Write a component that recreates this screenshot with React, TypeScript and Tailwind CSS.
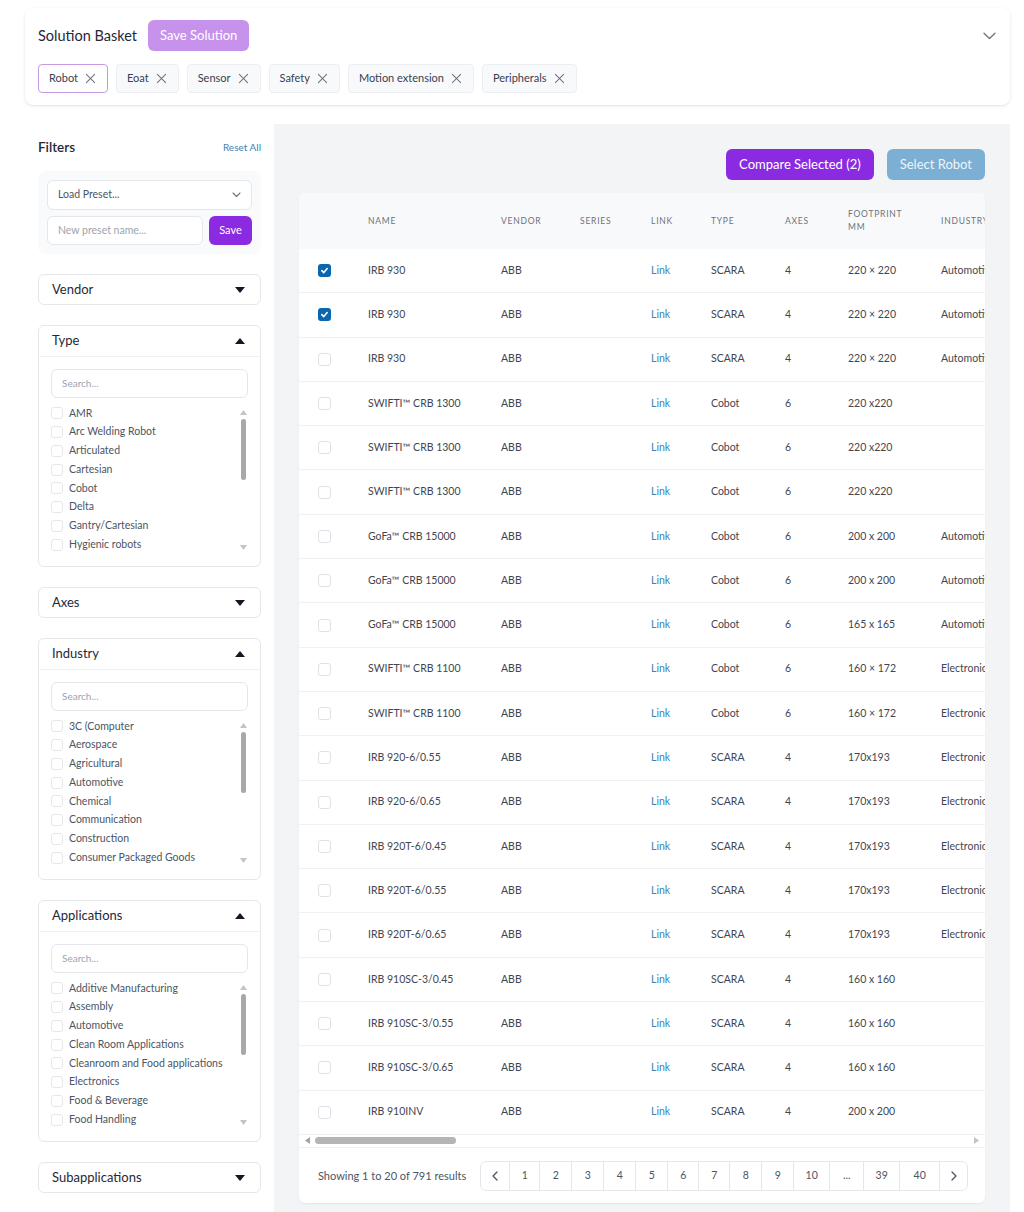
import React from "react";

const chips = ["Robot", "Eoat", "Sensor", "Safety", "Motion extension", "Peripherals"];

type Row = { name: string; vendor: string; type: string; axes: string; fp: string; ind: string; checked?: boolean };

const rows: Row[] = [
  { name: "IRB 930", vendor: "ABB", type: "SCARA", axes: "4", fp: "220 × 220", ind: "Automotive", checked: true },
  { name: "IRB 930", vendor: "ABB", type: "SCARA", axes: "4", fp: "220 × 220", ind: "Automotive", checked: true },
  { name: "IRB 930", vendor: "ABB", type: "SCARA", axes: "4", fp: "220 × 220", ind: "Automotive" },
  { name: "SWIFTI™ CRB 1300", vendor: "ABB", type: "Cobot", axes: "6", fp: "220 x220", ind: "" },
  { name: "SWIFTI™ CRB 1300", vendor: "ABB", type: "Cobot", axes: "6", fp: "220 x220", ind: "" },
  { name: "SWIFTI™ CRB 1300", vendor: "ABB", type: "Cobot", axes: "6", fp: "220 x220", ind: "" },
  { name: "GoFa™ CRB 15000", vendor: "ABB", type: "Cobot", axes: "6", fp: "200 x 200", ind: "Automotive" },
  { name: "GoFa™ CRB 15000", vendor: "ABB", type: "Cobot", axes: "6", fp: "200 x 200", ind: "Automotive" },
  { name: "GoFa™ CRB 15000", vendor: "ABB", type: "Cobot", axes: "6", fp: "165 x 165", ind: "Automotive" },
  { name: "SWIFTI™ CRB 1100", vendor: "ABB", type: "Cobot", axes: "6", fp: "160 × 172", ind: "Electronics" },
  { name: "SWIFTI™ CRB 1100", vendor: "ABB", type: "Cobot", axes: "6", fp: "160 × 172", ind: "Electronics" },
  { name: "IRB 920-6/0.55", vendor: "ABB", type: "SCARA", axes: "4", fp: "170x193", ind: "Electronics" },
  { name: "IRB 920-6/0.65", vendor: "ABB", type: "SCARA", axes: "4", fp: "170x193", ind: "Electronics" },
  { name: "IRB 920T-6/0.45", vendor: "ABB", type: "SCARA", axes: "4", fp: "170x193", ind: "Electronics" },
  { name: "IRB 920T-6/0.55", vendor: "ABB", type: "SCARA", axes: "4", fp: "170x193", ind: "Electronics" },
  { name: "IRB 920T-6/0.65", vendor: "ABB", type: "SCARA", axes: "4", fp: "170x193", ind: "Electronics" },
  { name: "IRB 910SC-3/0.45", vendor: "ABB", type: "SCARA", axes: "4", fp: "160 x 160", ind: "" },
  { name: "IRB 910SC-3/0.55", vendor: "ABB", type: "SCARA", axes: "4", fp: "160 x 160", ind: "" },
  { name: "IRB 910SC-3/0.65", vendor: "ABB", type: "SCARA", axes: "4", fp: "160 x 160", ind: "" },
  { name: "IRB 910INV", vendor: "ABB", type: "SCARA", axes: "4", fp: "200 x 200", ind: "" },
];

const typeItems = ["AMR", "Arc Welding Robot", "Articulated", "Cartesian", "Cobot", "Delta", "Gantry/Cartesian", "Hygienic robots"];
const industryItems = ["3C (Computer", "Aerospace", "Agricultural", "Automotive", "Chemical", "Communication", "Construction", "Consumer Packaged Goods"];
const appItems = ["Additive Manufacturing", "Assembly", "Automotive", "Clean Room Applications", "Cleanroom and Food applications", "Electronics", "Food & Beverage", "Food Handling"];

function XIcon() {
  return (
    <svg width="11" height="11" viewBox="0 0 12 12" fill="none" stroke="#6b7280" strokeWidth="1.1" strokeLinecap="round">
      <path d="M1.5 1.5 L10.5 10.5 M10.5 1.5 L1.5 10.5" />
    </svg>
  );
}

function Caret({ up }: { up?: boolean }) {
  return (
    <svg width="10" height="6" viewBox="0 0 10 6">
      {up ? <polygon points="0,6 10,6 5,0" fill="#111827" /> : <polygon points="0,0 10,0 5,6" fill="#111827" />}
    </svg>
  );
}

function Chevron({ dir }: { dir: "left" | "right" }) {
  return (
    <svg width="6" height="10" viewBox="0 0 6 10" fill="none" stroke="#4b5563" strokeWidth="1.3" strokeLinecap="round" strokeLinejoin="round">
      {dir === "left" ? <path d="M5 1 L1 5 L5 9" /> : <path d="M1 1 L5 5 L1 9" />}
    </svg>
  );
}

function ClosedSection({ title }: { title: string }) {
  return (
    <div className="flex h-[31px] items-center justify-between rounded-md border border-[#e5e7eb] bg-white pl-[13px] pr-[15px]">
      <span className="text-[13px] text-[#1f2937]">{title}</span>
      <Caret />
    </div>
  );
}

function OpenSection({ title, items }: { title: string; items: string[] }) {
  return (
    <div className="rounded-md border border-[#e5e7eb] bg-white">
      <div className="flex h-[31px] items-center justify-between border-b border-[#eef0f2] pl-[13px] pr-[15px]">
        <span className="text-[13px] text-[#1f2937]">{title}</span>
        <Caret up />
      </div>
      <div className="px-[12px] pt-[12px] pb-[12px]">
        <div className="flex h-[29px] items-center rounded-md border border-[#e5e7eb] px-[10px] text-[10px] text-[#9ca3af]">
          Search...
        </div>
        <div className="mt-[6px] flex">
          <div className="flex-1">
            {items.map((it) => (
              <div key={it} className="flex h-[18.75px] items-center gap-[6px]">
                <span className="h-[12px] w-[12px] rounded-[3px] border border-[#e5e7eb] bg-white" />
                <span className="text-[10.5px] text-[#4b5563]">{it}</span>
              </div>
            ))}
          </div>
          <div className="flex w-[10px] flex-col items-center pt-[6px] pb-[4px]">
            <svg width="7" height="5" viewBox="0 0 7 5"><polygon points="0,5 7,5 3.5,0" fill="#c4c4c4" /></svg>
            <div className="mt-[4px] h-[61px] w-[5px] rounded-full bg-[#a8a8a8]" />
            <div className="flex-1" />
            <svg width="7" height="5" viewBox="0 0 7 5"><polygon points="0,0 7,0 3.5,5" fill="#c4c4c4" /></svg>
          </div>
        </div>
      </div>
    </div>
  );
}

function Checkbox({ checked }: { checked?: boolean }) {
  if (checked) {
    return (
      <span className="flex h-[13px] w-[13px] items-center justify-center rounded-[3px] bg-[#0b66b0]">
        <svg width="9" height="9" viewBox="0 0 10 10" fill="none" stroke="white" strokeWidth="1.8" strokeLinecap="round" strokeLinejoin="round">
          <path d="M2 5.2 L4.2 7.3 L8 2.8" />
        </svg>
      </span>
    );
  }
  return <span className="h-[13px] w-[13px] rounded-[3px] border border-[#dfe2e6] bg-white" />;
}

const cols = ["w-[57px]", "w-[133px]", "w-[79px]", "w-[71px]", "w-[60px]", "w-[74px]", "w-[63px]", "w-[93px]", "w-[130px]"];

const pages = [
  { t: "<", w: "w-[28px]" },
  { t: "1", w: "w-[30px]" },
  { t: "2", w: "w-[32px]" },
  { t: "3", w: "w-[32px]" },
  { t: "4", w: "w-[32px]" },
  { t: "5", w: "w-[32px]" },
  { t: "6", w: "w-[31px]" },
  { t: "7", w: "w-[31px]" },
  { t: "8", w: "w-[32px]" },
  { t: "9", w: "w-[32px]" },
  { t: "10", w: "w-[36px]" },
  { t: "...", w: "w-[34px]" },
  { t: "39", w: "w-[36px]" },
  { t: "40", w: "w-[40px]" },
  { t: ">", w: "w-[28px]" },
];

export default function App() {
  return (
    <div className="min-h-[1212px] bg-white pl-[25px] pr-[14px] pt-[8px] font-[Lato,'Noto_Sans',sans-serif] text-[#374151]">
      {/* Solution basket */}
      <div className="rounded-lg bg-white px-[13px] pt-[12px] pb-[12px] shadow-[0_1px_3px_rgba(0,0,0,0.12)]">
        <div className="flex items-center justify-between">
          <div className="flex items-center gap-[11px]">
            <span className="text-[14.5px] text-[#1f2937]">Solution Basket</span>
            <button className="h-[31px] rounded-md bg-[#c792ec] px-[12px] text-[13px] text-white">Save Solution</button>
          </div>
          <svg width="13" height="8" viewBox="0 0 13 8" fill="none" stroke="#6b7280" strokeWidth="1.3" strokeLinecap="round" strokeLinejoin="round" className="mr-[1px]">
            <path d="M1 1.2 L6.5 6.5 L12 1.2" />
          </svg>
        </div>
        <div className="mt-[13px] flex gap-[8px]">
          {chips.map((c, i) => (
            <div
              key={c}
              className={
                "flex h-[29px] items-center gap-[7px] rounded-[4px] border pl-[10px] pr-[11px] text-[11px] text-[#374151] " +
                (i === 0 ? "border-[#c89ae6] bg-white" : "border-[#eceef1] bg-[#f8f9fa]")
              }
            >
              <span>{c}</span>
              <XIcon />
            </div>
          ))}
        </div>
      </div>

      <div className="mt-[19px] flex">
        {/* Sidebar */}
        <div className="w-[249px] shrink-0 px-[13px] pt-[15px] pb-[18px]">
          <div className="flex h-[17px] items-center justify-between">
            <span className="text-[13.5px] font-semibold text-[#1f2937]">Filters</span>
            <span className="text-[10px] text-[#3b82b5]">Reset All</span>
          </div>
          <div className="mt-[15px] rounded-lg bg-[#f9fafb] p-[9px]">
            <div className="flex h-[30px] items-center justify-between rounded-md border border-[#e5e7eb] bg-white pl-[10px] pr-[10px]">
              <span className="text-[10.5px] text-[#4b5563]">Load Preset...</span>
              <svg width="9" height="6" viewBox="0 0 9 6" fill="none" stroke="#6b7280" strokeWidth="1.1" strokeLinecap="round" strokeLinejoin="round">
                <path d="M1 1 L4.5 4.5 L8 1" />
              </svg>
            </div>
            <div className="mt-[6px] flex gap-[6px]">
              <div className="flex h-[29px] flex-1 items-center rounded-md border border-[#e5e7eb] bg-white px-[10px] text-[10.5px] text-[#9ca3af]">
                New preset name...
              </div>
              <button className="h-[29px] w-[43px] rounded-md bg-[#8a2be2] text-[11px] text-white">Save</button>
            </div>
          </div>
          <div className="mt-[20px] flex flex-col gap-[20px]">
            <ClosedSection title="Vendor" />
            <OpenSection title="Type" items={typeItems} />
            <ClosedSection title="Axes" />
            <OpenSection title="Industry" items={industryItems} />
            <OpenSection title="Applications" items={appItems} />
            <ClosedSection title="Subapplications" />
          </div>
        </div>

        {/* Main */}
        <div className="min-w-0 flex-1 bg-[#f3f4f6] px-[25px] pt-[25px] pb-[11px]">
          <div className="flex justify-end gap-[13px]">
            <button className="h-[31px] rounded-md bg-[#8a2be2] px-[13px] text-[13px] text-white">Compare Selected (2)</button>
            <button className="h-[31px] rounded-md bg-[#7bafd4] px-[13px] text-[13px] text-[#eef5fb]">Select Robot</button>
          </div>
          <div className="mt-[13px] min-w-0 overflow-hidden rounded-md bg-white shadow-[0_1px_2px_rgba(0,0,0,0.06)]">
            <div className="overflow-hidden">
              <div className="w-[760px]">
                <div className="flex h-[56px] items-center bg-[#f8f9fa] text-[8.5px] tracking-[0.09em] text-[#6b7280]">
                  {["", "NAME", "VENDOR", "SERIES", "LINK", "TYPE", "AXES", "FOOTPRINT MM", "INDUSTRY"].map((h, i) => (
                    <div key={i} className={cols[i] + " shrink-0 pl-[12px] leading-[13px]"}>
                      {h === "FOOTPRINT MM" ? (
                        <div>
                          <div>FOOTPRINT</div>
                          <div>MM</div>
                        </div>
                      ) : (
                        h
                      )}
                    </div>
                  ))}
                </div>
                {rows.map((r, idx) => (
                  <div key={idx} className="flex h-[44.3px] items-center border-b border-[#f0f1f3] text-[10.5px] text-[#3f4651]">
                    <div className={cols[0] + " flex shrink-0 pl-[19px]"}>
                      <Checkbox checked={r.checked} />
                    </div>
                    <div className={cols[1] + " shrink-0 pl-[12px] whitespace-nowrap"}>{r.name}</div>
                    <div className={cols[2] + " shrink-0 pl-[12px]"}>{r.vendor}</div>
                    <div className={cols[3] + " shrink-0 pl-[12px]"}></div>
                    <div className={cols[4] + " shrink-0 pl-[12px] text-[#3b82b5]"}>Link</div>
                    <div className={cols[5] + " shrink-0 pl-[12px]"}>{r.type}</div>
                    <div className={cols[6] + " shrink-0 pl-[12px]"}>{r.axes}</div>
                    <div className={cols[7] + " shrink-0 pl-[12px] whitespace-nowrap"}>{r.fp}</div>
                    <div className={cols[8] + " shrink-0 pl-[12px] whitespace-nowrap"}>{r.ind}</div>
                  </div>
                ))}
              </div>
            </div>
            {/* horizontal scrollbar */}
            <div className="flex h-[12px] items-center px-[6px]">
              <svg width="5" height="7" viewBox="0 0 5 7"><polygon points="5,0 5,7 0,3.5" fill="#a3a3a3" /></svg>
              <div className="ml-[5px] h-[7px] w-[141px] rounded-full bg-[#b5b5b5]" />
              <div className="flex-1" />
              <svg width="5" height="7" viewBox="0 0 5 7"><polygon points="0,0 0,7 5,3.5" fill="#c4c4c4" /></svg>
            </div>
            <div className="flex items-center gap-[14px] border-t border-[#eef0f2] px-[19px] pt-[13px] pb-[12px]">
              <span className="shrink-0 whitespace-nowrap text-[11px] text-[#4b5563]">Showing 1 to 20 of 791 results</span>
              <div className="flex h-[30px] shrink-0 rounded-md border border-[#e5e7eb] text-[10.5px] text-[#4b5563]">
                {pages.map((p, i) => (
                  <div
                    key={i}
                    className={p.w + " flex items-center justify-center " + (i > 0 ? "border-l border-[#e5e7eb]" : "")}
                  >
                    {p.t === "<" ? <Chevron dir="left" /> : p.t === ">" ? <Chevron dir="right" /> : p.t}
                  </div>
                ))}
              </div>
            </div>
          </div>
        </div>
      </div>
    </div>
  );
}
